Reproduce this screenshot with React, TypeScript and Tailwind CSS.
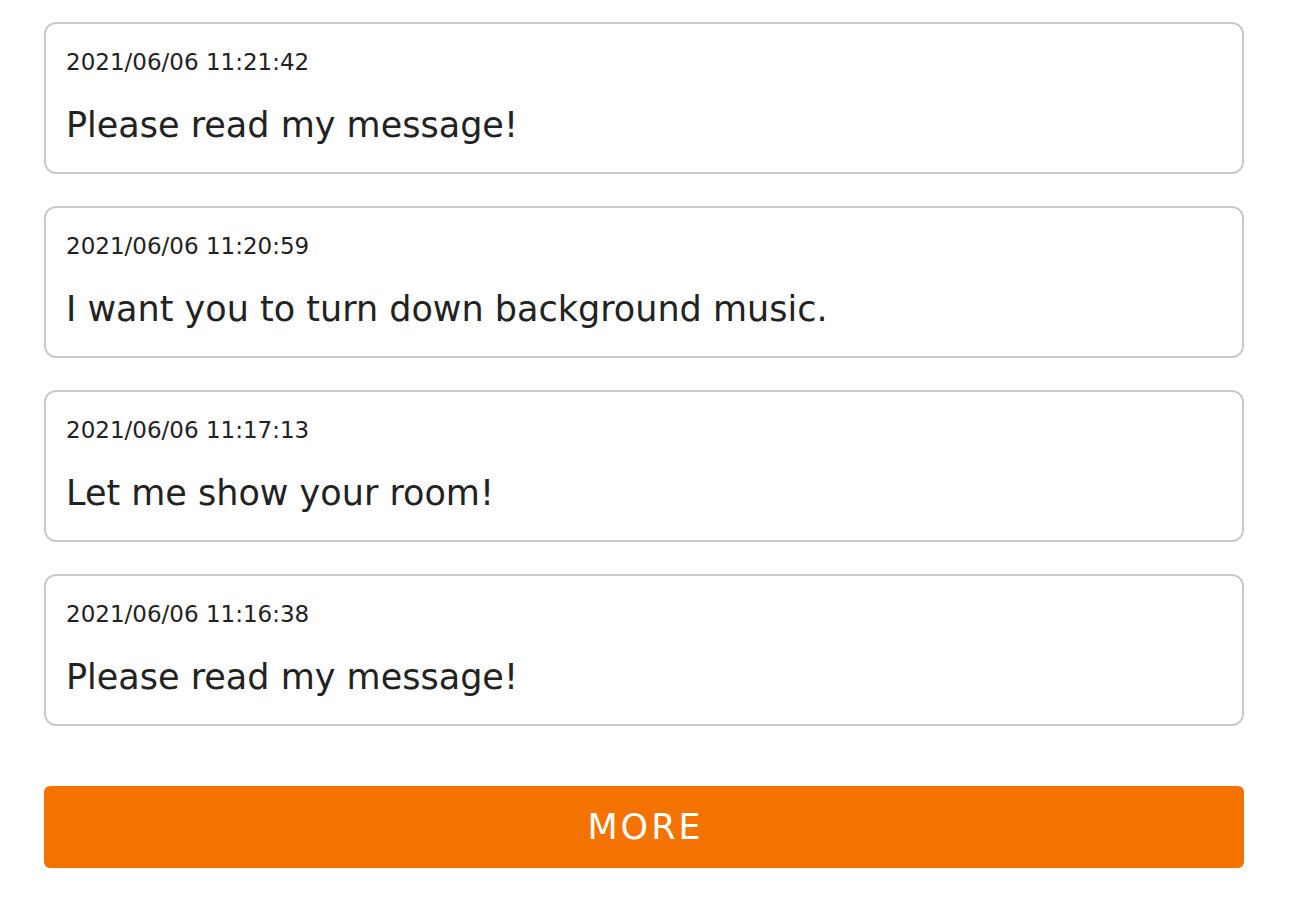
const messages = [
  { time: '2021/06/06 11:21:42', text: 'Please read my message!' },
  { time: '2021/06/06 11:20:59', text: 'I want you to turn down background music.' },
  { time: '2021/06/06 11:17:13', text: 'Let me show your room!' },
  { time: '2021/06/06 11:16:38', text: 'Please read my message!' },
]

export default function App() {
  return (
    <div className="min-h-screen bg-white font-['DejaVu_Sans',sans-serif] text-[#222]">
      <div className="ml-[44px] w-[1200px] pt-[22px]">
        <ul className="flex flex-col gap-[32px]">
          {messages.map((m, i) => (
            <li
              key={i}
              className="rounded-[12px] border-2 border-[#cacaca] px-[20px] pt-[22px] pb-[27px]"
            >
              <p className="text-[23px] leading-[32px]">{m.time}</p>
              <p className="mt-[27px] text-[35px] leading-[40px]">{m.text}</p>
            </li>
          ))}
        </ul>

        {/* More button */}
        <button className="mt-[60px] flex h-[82px] w-full items-center justify-center rounded-[6px] bg-[#f47200] pl-[3px] text-[35px] tracking-[3px] text-white">
          MORE
        </button>
      </div>
    </div>
  )
}
